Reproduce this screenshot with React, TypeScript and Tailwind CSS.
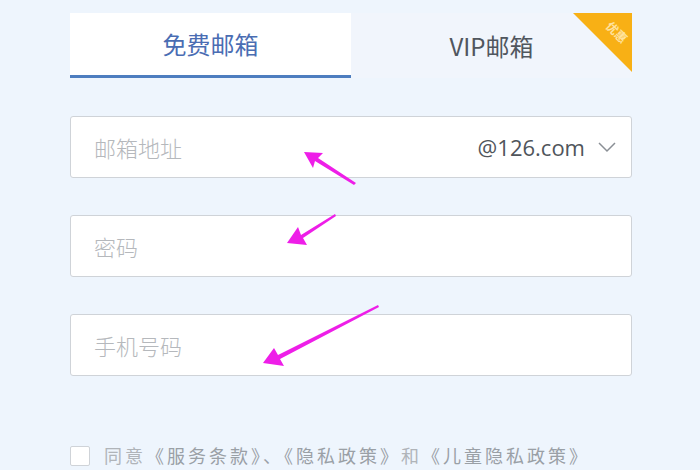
export default function App() {
  const font = { fontFamily: '"Noto Sans CJK SC", "Noto Sans", sans-serif' };
  return (
    <div className="relative w-[700px] h-[470px] overflow-hidden bg-[#eef5fd]" style={font}>
      <div className="ml-[70px] w-[562px] pt-[13px]">
        <div className="flex h-[65px]">
          <div className="flex-1 bg-white border-b-[3px] border-[#4d7dbf] flex items-center justify-center text-[24px] text-[#4a6db3]">
            免费邮箱
          </div>
          <div className="relative flex-1 bg-[#f1f5fc] flex items-center justify-center text-[24px] text-[#50565e]">
            VIP邮箱
            <div className="absolute top-0 right-0 w-[59px] h-[59px] bg-[#f8b015] [clip-path:polygon(0_0,100%_0,100%_100%)]">
              <span className="absolute top-[10px] right-[3px] rotate-45 text-[12px] text-[#ffe3a0] font-bold">优惠</span>
            </div>
          </div>
        </div>

        <div className="mt-[38px] flex flex-col gap-[37px]">
          <div className="h-[62px] bg-white border border-[#cfd3d8] rounded-[3px] flex items-center px-[23px]">
            <span className="flex-1 text-[22px] font-light text-[#b5b8bc]">邮箱地址</span>
            <span className="text-[22px] text-[#50555b]" style={{ fontFamily: '"Open Sans", "Noto Sans", sans-serif' }}>@126.com</span>
            <svg width="18" height="12" viewBox="0 0 18 12" className="ml-[13px] mr-[-8px]">
              <path d="M1 2 L9 10 L17 2" fill="none" stroke="#8a8f95" strokeWidth="1.5" />
            </svg>
          </div>
          <div className="h-[62px] bg-white border border-[#cfd3d8] rounded-[3px] flex items-center px-[23px]">
            <span className="text-[22px] font-light text-[#b5b8bc]">密码</span>
          </div>
          <div className="h-[62px] bg-white border border-[#cfd3d8] rounded-[3px] flex items-center px-[23px]">
            <span className="text-[22px] font-light text-[#b5b8bc]">手机号码</span>
          </div>
        </div>

        <div className="mt-[66px] flex items-center gap-[14px]">
          <div className="w-[20px] h-[20px] bg-white border border-[#cfd3d8] rounded-[2px]" />
          <span className="text-[18px] tracking-[3px] text-[#b0b4b9]">
            同意<span className="text-[#9aa0a6]">《服务条款》、《隐私政策》</span>和<span className="text-[#9aa0a6]">《儿童隐私政策》</span>
          </span>
        </div>
      </div>

      <svg className="absolute inset-0 pointer-events-none" width="700" height="470">
        <g fill="#ee1ee8">
          <polygon points="304,152 323,153 318,158 356,183 354,185 315,161 313,168" />
          <polygon points="287,243 298,227 301,235 335,214 336,216 303,238 307,245" />
          <polygon points="263,363 274,348 278,355 378,305 379,307 280,359 284,366" />
        </g>
      </svg>
    </div>
  );
}
